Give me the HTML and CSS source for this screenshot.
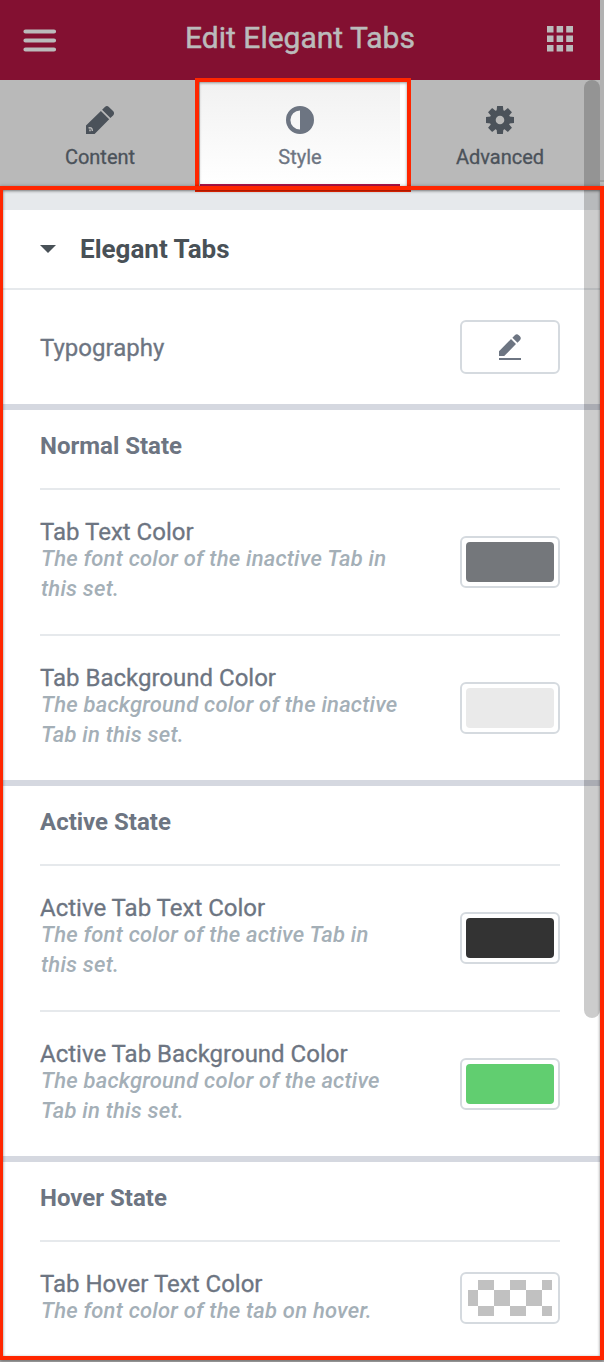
FILE: index.html
```html
<!DOCTYPE html>
<html lang="en">
<head>
<meta charset="utf-8">
<title>Edit Elegant Tabs</title>
<link rel="stylesheet" href="styles.css">
</head>
<body>
<div class="window">
  <aside class="panel">
    <header class="header">
      <svg class="menu-icon" width="34" height="24" viewBox="0 0 34 24"><path d="M2.5 2.5h28.5M2.5 11.5h28.5M2.5 20.5h28.5" stroke="#bbb" stroke-width="4.2" stroke-linecap="round"/></svg>
      <h1 class="title">Edit Elegant Tabs</h1>
      <svg class="grid-icon" width="26" height="26" viewBox="0 0 26 26" fill="#bbb"><path d="M0 0h6.5v6.5H0zM9.6 0h6.5v6.5H9.6zM19.2 0h6.8v6.5h-6.8zM0 9.5h6.5V16H0zM9.6 9.5h6.5V16H9.6zM19.2 9.5h6.8V16h-6.8zM0 19h6.5v6.5H0zM9.6 19h6.5v6.5H9.6zM19.2 19h6.8v6.5h-6.8z"/></svg>
    </header>
    <nav class="tabs">
      <div class="tab">
        <svg width="28" height="28" viewBox="0 0 28 28"><path fill="#4b525a" d="M0 19.5 14.9 4.9l8.3 8.3L8.6 28H0zM16.1 3.7l2.8-2.8q2-1.6 4 0l4.4 4.4q1.5 2 0 4L24.4 12z"/><path fill="none" stroke="#b9b9b9" stroke-width="1.4" d="M2.6 22q3.6-1.3 3.8 3"/><path fill="#b9b9b9" d="M3.2 23.6h1.6v1.6H3.2z"/></svg>
        <span class="tab-label">Content</span>
      </div>
      <div class="tab active">
        <svg width="28" height="28" viewBox="0 0 28 28"><circle cx="14" cy="14" r="11.8" fill="none" stroke="#6d7582" stroke-width="4.4"/><path d="M14 1a13 13 0 0 1 0 26z" fill="#6d7582"/></svg>
        <span class="tab-label">Style</span>
      </div>
      <div class="tab">
        <svg width="28" height="28" viewBox="-14 -14 28 28"><g fill="#4b525a"><circle r="10.3"/><path id="tooth" d="M-3.4-9-2.9-14h5.8L3.4-9v18L2.9 14h-5.8L-3.4 9z"/><use href="#tooth" transform="rotate(45)"/><use href="#tooth" transform="rotate(90)"/><use href="#tooth" transform="rotate(135)"/></g><circle r="4.3" fill="#b9b9b9"/></svg>
        <span class="tab-label">Advanced</span>
      </div>
    </nav>
    <main class="content">
      <h2 class="section-title"><span class="caret"></span><span>Elegant Tabs</span></h2>
      <div class="typography">
        <span class="label typo">Typography</span>
        <span class="edit"><svg width="22" height="26" viewBox="0 0 22 26" fill="#6d7582"><path d="M0 17.2 12 5.1l5 5L5.2 22H0zM13.4 3.8l2.4-2.6q2-1.8 4 0l1.1 1.1q1.8 2 0 4l-2.4 2.5zM0 24h22v2H0z"/></svg></span>
      </div>
      <section class="group">
        <h3 class="heading">Normal State</h3>
        <div class="row"><div class="copy"><div class="label">Tab Text Color</div><p class="desc">The font color of the inactive Tab in<br>this set.</p></div><span class="picker"><i class="swatch gray"></i></span></div>
        <div class="row"><div class="copy"><div class="label">Tab Background Color</div><p class="desc">The background color of the inactive<br>Tab in this set.</p></div><span class="picker"><i class="swatch light"></i></span></div>
      </section>
      <section class="group">
        <h3 class="heading">Active State</h3>
        <div class="row"><div class="copy"><div class="label">Active Tab Text Color</div><p class="desc">The font color of the active Tab in<br>this set.</p></div><span class="picker"><i class="swatch dark"></i></span></div>
        <div class="row"><div class="copy"><div class="label">Active Tab Background Color</div><p class="desc">The background color of the active<br>Tab in this set.</p></div><span class="picker"><i class="swatch green"></i></span></div>
      </section>
      <section class="group">
        <h3 class="heading">Hover State</h3>
        <div class="row last"><div class="copy"><div class="label">Tab Hover Text Color</div><p class="desc">The font color of the tab on hover.</p></div><span class="picker"><svg class="checker" width="84" height="36" viewBox="0 0 84 36" fill="#c1c1c1"><path d="M10 0h16v10H10zM42 0h16v10H42zM74 0h10v10H74zM0 10h10v16H0zM26 10h16v16H26zM58 10h16v16H58zM10 26h16v10H10zM42 26h16v10H42zM74 26h10v10H74z"/></svg></span></div>
      </section>
    </main>
  </aside>
  <div class="scrollbar"></div>
  <div class="outline tab-outline"></div>
  <div class="outline panel-outline"></div>
</div>
</body>
</html>
```
FILE: styles.css
```css
* { box-sizing: border-box; }
body { margin: 0; font-family: Roboto, sans-serif; color: #6d7582; }
h1, h2, h3, p { margin: 0; }
svg { display: block; flex: none; }
.window { position: relative; width: 604px; height: 1362px; overflow: hidden; background: linear-gradient(#b2b2b2 180px, #9d9d9d 180px, #9d9d9d 182px, #b9b9b9 182px); }
.panel { width: 600px; }
.header { height: 80px; background: #831031; display: flex; align-items: center; justify-content: space-between; padding: 0 27px 0 23px; }
.title { font-size: 30px; font-weight: 400; color: #bbb; line-height: 40px; padding: 0 4px 5px 0; -webkit-text-stroke: .5px #bbb; }
.menu-icon { margin-top: 1px; }
.grid-icon { margin-top: -3px; }
.tabs { height: 106px; display: grid; grid-template-columns: 200px 200px 200px; background: #b9b9b9; color: #4b525a; }
.tab { display: flex; flex-direction: column; align-items: center; padding-top: 26px; }
.tab.active { color: #6d7582; background: linear-gradient(#f1f1f1, #fff); border-bottom: 2px solid #b0154a; box-shadow: 8px 0 #fff; }
.tab-label { font-size: 20px; line-height: 24px; margin-top: 11px; -webkit-text-stroke: .3px; }
.content { border-top: 24px solid #e6e9ec; height: 1174px; background: #fff; }
.section-title { height: 80px; border-bottom: 2px solid #e6e9ec; display: flex; align-items: center; padding-left: 40px; gap: 25px; font-size: 26px; font-weight: 700; color: #495157; }
.caret { border: 7.5px solid transparent; border-top: 8px solid #495157; border-bottom: 0; border-left-width: 8px; border-right-width: 8px; margin-right: -1px; }
.typography { height: 114px; padding: 0 40px; display: flex; align-items: center; justify-content: space-between; }
.label { font-size: 24px; line-height: 28px; -webkit-text-stroke: .3px; white-space: nowrap; }
.typo { padding-top: 2px; }
.edit { width: 100px; height: 54px; border: 2px solid #d5dadf; border-radius: 6px; display: flex; align-items: center; justify-content: center; }
.group { border-top: 6px solid #d5d8e0; padding: 0 40px; }
.heading { height: 78px; font-size: 24px; line-height: 73px; font-weight: 700; }
.row { height: 146px; border-top: 2px solid #e6e9ec; display: flex; align-items: center; justify-content: space-between; }
.row.last { height: 114px; }
.copy { width: 370px; padding-bottom: 2px; }
.last .copy { padding-bottom: 0; }
.desc { font-size: 22px; line-height: 30px; font-style: italic; font-weight: 500; letter-spacing: .21px; color: #a4afb7; white-space: nowrap; margin-top: -2px; padding-left: 1px; }
.picker { width: 100px; height: 52px; border: 2px solid #d5dadf; border-radius: 6px; display: flex; align-items: center; justify-content: center; }
.swatch { width: 88px; height: 40px; border-radius: 4px; }
.gray { background: #74777b; }
.light { background: #eaeaea; }
.dark { background: #333; }
.green { background: #61ce70; }
.checker { margin: 0 0 1px; }
.scrollbar { position: absolute; left: 584px; top: 80px; width: 16px; height: 938px; border-radius: 8px; background: rgba(0,0,0,.2); }
.outline { position: absolute; border: 4px solid #ff2600; }
.tab-outline { left: 195px; top: 78px; width: 216px; height: 114px; box-shadow: inset 0 1px 3px rgba(0,0,0,.4); }
.panel-outline { left: -1px; top: 186px; width: 605px; height: 1174px; box-shadow: 0 1px 4px rgba(0,0,0,.5), inset 0 1px 3px rgba(0,0,0,.5); }
```
